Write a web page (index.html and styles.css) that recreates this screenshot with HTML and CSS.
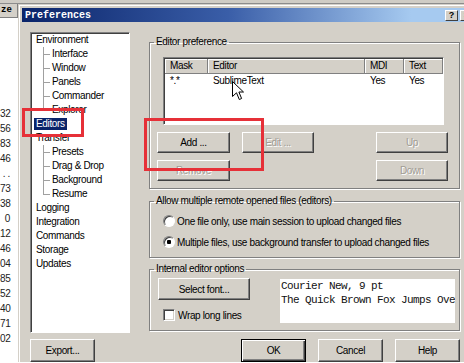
FILE: index.html
```html
<!DOCTYPE html>
<html>
<head>
    <title>Preferences</title>
    <link rel="stylesheet" href="styles.css">
</head>
<body>
    <div class="topstrip"></div>
    <div class="screen">
        <div class="behind">
            <div class="colhead">ze</div>
            <div class="nums">
                <div>32</div><div>56</div><div>83</div><div>46</div><div>. .</div>
                <div>73</div><div>38</div><div>0</div><div>12</div><div>46</div>
                <div>04</div><div>85</div><div>52</div><div>40</div><div>71</div><div>02</div>
            </div>
        </div>

        <div class="dialog">
            <div class="titlebar">
                <span class="title">Preferences</span>
                <span class="tbtn help">?</span>
                <span class="tbtn close">&#215;</span>
            </div>

            <div class="content">
                <ul class="tree">
                    <li>Environment
                        <ul>
                            <li>Interface</li>
                            <li>Window</li>
                            <li>Panels</li>
                            <li>Commander</li>
                            <li>Explorer</li>
                        </ul>
                    </li>
                    <li><span class="selected">Editors</span></li>
                    <li>Transfer
                        <ul>
                            <li>Presets</li>
                            <li>Drag &amp; Drop</li>
                            <li>Background</li>
                            <li>Resume</li>
                        </ul>
                    </li>
                    <li>Logging</li>
                    <li>Integration</li>
                    <li>Commands</li>
                    <li>Storage</li>
                    <li>Updates</li>
                </ul>

                <div class="pane">
                    <fieldset class="group">
                        <legend>Editor preference</legend>
                        <div class="list">
                            <table>
                                <colgroup><col class="c-mask"><col class="c-editor"><col class="c-mdi"><col></colgroup>
                                <thead>
                                    <tr><th>Mask</th><th>Editor</th><th>MDI</th><th>Text</th></tr>
                                </thead>
                                <tbody>
                                    <tr><td>*.*</td><td>SublimeText</td><td>Yes</td><td>Yes</td></tr>
                                </tbody>
                            </table>
                        </div>
                        <div class="list-buttons">
                            <button class="btn">Add ...</button>
                            <button class="btn" disabled>Edit ...</button>
                            <button class="btn right" disabled>Up</button>
                            <button class="btn" disabled>Remove</button>
                            <button class="btn right col3" disabled>Down</button>
                        </div>
                    </fieldset>

                    <fieldset class="group multi">
                        <legend>Allow multiple remote opened files (editors)</legend>
                        <div class="option"><span class="radio"></span>One file only, use main session to upload changed files</div>
                        <div class="option"><span class="radio checked"></span>Multiple files, use background transfer to upload changed files</div>
                    </fieldset>

                    <fieldset class="group internal">
                        <legend>Internal editor options</legend>
                        <div class="internal-row">
                            <div class="internal-left">
                                <button class="btn select-font">Select font...</button>
                                <div class="option"><span class="checkbox"></span>Wrap long lines</div>
                            </div>
                            <div class="preview">
                                <div>Courier New, 9 pt</div>
                                <div>The Quick Brown Fox Jumps Over The Lazy Dog</div>
                            </div>
                        </div>
                    </fieldset>
                </div>

                <div class="footer">
                    <button class="btn export">Export...</button>
                    <button class="btn default">OK</button>
                    <button class="btn">Cancel</button>
                    <button class="btn">Help</button>
                </div>
            </div>
        </div>
    </div>

    <div class="mark mark-editors"></div>
    <div class="mark mark-add"></div>
    <svg class="cursor" width="13" height="20" viewBox="0 0 13 20">
        <path d="M0.5 0.5 V15.5 L4.5 11.8 L7.3 18.5 L9.6 17.5 L6.9 11 H11.5 Z" fill="#fff" stroke="#000" stroke-width="1"/>
    </svg>
</body>
</html>
```

FILE: styles.css
```css
body {
    margin: 0;
    width: 464px;
    height: 363px;
    overflow: hidden;
    position: relative;
    background: #fff;
    font-family: "Liberation Sans", Arial, sans-serif;
    font-size: 10px;
    letter-spacing: -0.35px;
    color: #000;
}
.topstrip {
    height: 3px;
    background: #cfccc5;
    border-bottom: 1px solid #8c8c8c;
}
.screen {
    display: flex;
}
.behind {
    width: 18px;
    flex: none;
}
.colhead {
    height: 13px;
    background: #d4d0c8;
    border-right: 1px solid #808080;
    border-bottom: 1px solid #808080;
    font-family: "Liberation Mono", monospace;
    font-weight: bold;
    font-size: 9px;
    letter-spacing: 0;
    line-height: 13px;
    padding-left: 1px;
}
.nums {
    margin-top: 88px;
    padding-right: 8px;
    text-align: right;
    line-height: 15px;
    color: #222;
    font-size: 10px;
}

/* dialog frame */
.dialog {
    width: 458px;
    flex: none;
    background: #d4d0c8;
    border-top: 1px solid #d4d0c8;
    border-left: 1px solid #d4d0c8;
    box-shadow: inset 1px 1px #fff;
    padding: 3px 3px 0 3px;
}
.titlebar {
    height: 14px;
    display: flex;
    align-items: center;
    background: linear-gradient(90deg, #0a246a 0%, #3a5ea8 45%, #a6caf0 85%);
}
.title {
    font-family: "Liberation Mono", monospace;
    font-weight: bold;
    font-size: 10px;
    letter-spacing: 0;
    color: #fff;
    padding-left: 3px;
}
.tbtn {
    width: 11px;
    height: 9px;
    background: #d4d0c8;
    border: 1px solid;
    border-color: #fff #404040 #404040 #fff;
    font-family: "Liberation Sans", Arial, sans-serif;
    font-weight: bold;
    font-size: 9px;
    letter-spacing: 0;
    line-height: 9px;
    text-align: center;
}
.help {
    margin-left: auto;
}
.close {
    margin-left: 2px;
    margin-right: 7px;
}

.content {
    display: grid;
    grid-template-columns: 100px 311px;
    grid-template-rows: 301px 23px;
    column-gap: 19px;
    row-gap: 6px;
    padding: 10px 0 0 8px;
}

/* tree */
.tree, .tree ul {
    list-style: none;
    margin: 0;
}
.tree {
    box-sizing: border-box;
    background: #fff;
    border: 1px solid;
    border-color: #808080 #fff #fff #808080;
    box-shadow: inset 1px 1px #404040;
    padding: 0 0 0 5px;
    line-height: 14px;
}
.tree ul {
    padding-left: 16px;
}
.tree ul li {
    position: relative;
}
.tree ul li::before {
    content: "";
    position: absolute;
    left: -9px;
    top: 0;
    width: 6px;
    height: 7px;
    border-left: 1px solid #a0a0a0;
    border-bottom: 1px solid #a0a0a0;
}
.tree ul li:not(:last-child)::after {
    content: "";
    position: absolute;
    left: -9px;
    top: 7px;
    bottom: 0;
    border-left: 1px solid #a0a0a0;
}
.selected {
    display: inline-block;
    margin-left: -2px;
    padding: 0 2px;
    line-height: 12px;
    background: #0a246a;
    color: #fff;
}

/* group boxes */
.pane {
    padding-top: 4px;
    display: flex;
    flex-direction: column;
}
.group {
    margin: 0;
    padding: 0;
    border: 1px solid #808080;
    box-shadow: 1px 1px 0 #fff, inset 1px 1px 0 #fff;
    min-width: 0;
}
.group legend {
    margin-left: 4px;
    padding: 0 2px;
    line-height: 12px;
}
.group.multi {
    margin-top: 6px;
    padding-bottom: 8px;
}
.group.internal {
    margin-top: 5px;
    padding-bottom: 7px;
}

/* list view */
.list {
    box-sizing: border-box;
    width: 281px;
    height: 68px;
    margin: 9px 0 0 13px;
    background: #fff;
    border: 1px solid;
    border-color: #808080 #fff #fff #808080;
    box-shadow: inset 1px 1px #404040;
    padding: 1px 0 0 1px;
    overflow: hidden;
}
.list table {
    width: 100%;
    table-layout: fixed;
    border-spacing: 0;
}
.c-mask { width: 43px; }
.c-editor { width: 157px; }
.c-mdi { width: 39px; }
.list th {
    font-weight: normal;
    text-align: left;
    padding: 0 0 0 5px;
    line-height: 14px;
    background: #d4d0c8;
    border-right: 1px solid #808080;
    border-bottom: 1px solid #808080;
    box-shadow: inset 1px 1px #fff;
}
.list td {
    padding: 0 0 0 5px;
    line-height: 13px;
    white-space: nowrap;
}

/* buttons */
.btn {
    font: inherit;
    letter-spacing: inherit;
    color: #000;
    background: #d4d0c8;
    border: 1px solid;
    border-color: #fff #404040 #404040 #fff;
    box-shadow: inset -1px -1px #808080;
    padding: 0;
    margin: 0;
    height: 21px;
}
.btn:disabled {
    color: #a09c94;
    text-shadow: 1px 1px #fff;
}
.list-buttons {
    display: grid;
    grid-template-columns: 73px 72px 1fr;
    column-gap: 12px;
    row-gap: 7px;
    margin: 7px 11px 0 7px;
    padding-bottom: 7px;
}
.list-buttons .right {
    width: 72px;
    justify-self: end;
}
.list-buttons .col3 {
    grid-column: 3;
}

.option {
    display: flex;
    align-items: center;
    height: 14px;
    margin: 7px 0 0 13px;
    white-space: nowrap;
}
.radio {
    box-sizing: border-box;
    width: 12px;
    height: 12px;
    margin-right: 2px;
    border-radius: 50%;
    border: 1px solid;
    border-color: #808080 #fff #fff #808080;
    box-shadow: inset 1px 1px #404040;
    background: #fff;
}
.radio.checked {
    background: radial-gradient(circle, #000 0 2px, #fff 2.5px);
}
.checkbox {
    box-sizing: border-box;
    width: 12px;
    height: 12px;
    margin-right: 3px;
    border: 1px solid;
    border-color: #808080 #fff #fff #808080;
    box-shadow: inset 1px 1px #404040, inset -1px -1px #d4d0c8;
    background: #fff;
}

.internal-row {
    display: flex;
}
.internal-left {
    margin-left: 8px;
    width: 92px;
}
.select-font {
    width: 92px;
    height: 22px;
    margin-top: 3px;
}
.internal-left .option {
    margin: 8px 0 0 5px;
}
.preview {
    width: 175px;
    height: 44px;
    margin: 4px 4px 0 auto;
    padding: 0 0 0 1px;
    box-sizing: border-box;
    background: #fff;
    overflow: hidden;
    white-space: nowrap;
    font-family: "Liberation Mono", monospace;
    font-size: 11px;
    letter-spacing: -0.6px;
    line-height: 14px;
    color: #111;
}

.footer {
    grid-column: 1 / -1;
    display: flex;
    gap: 12px;
}
.footer .btn {
    width: 65px;
    height: 23px;
}
.footer .export {
    margin-right: auto;
}
.btn.default {
    border-color: #000;
    box-shadow: inset 1px 1px #fff, inset -1px -1px #404040, inset -2px -2px #808080;
}

/* annotation overlays */
.mark {
    position: absolute;
    border: 3px solid #e63038;
}
.mark-editors {
    left: 22px;
    top: 108px;
    width: 56px;
    height: 23px;
}
.mark-add {
    left: 144px;
    top: 118px;
    width: 114px;
    height: 47px;
}
.cursor {
    position: absolute;
    left: 232px;
    top: 81px;
}
```
